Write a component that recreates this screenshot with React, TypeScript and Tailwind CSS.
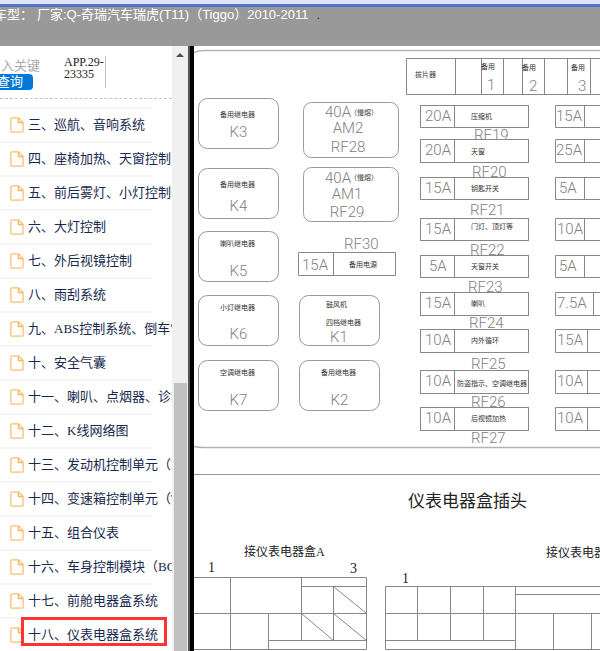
import React from "react";

const SANS = "font-['Liberation_Sans','Noto_Sans_CJK_SC',sans-serif]";
const SERIF = "font-['Liberation_Serif','Noto_Sans_CJK_SC',serif]";

const chapters = [
  "三、巡航、音响系统",
  "四、座椅加热、天窗控制",
  "五、前后雾灯、小灯控制",
  "六、大灯控制",
  "七、外后视镜控制",
  "八、雨刮系统",
  "九、ABS控制系统、倒车雷达",
  "十、安全气囊",
  "十一、喇叭、点烟器、诊断",
  "十二、K线网络图",
  "十三、发动机控制单元（ECU）",
  "十四、变速箱控制单元（TCU）",
  "十五、组合仪表",
  "十六、车身控制模块（BCM）",
  "十七、前舱电器盒系统",
  "十八、仪表电器盒系统",
];

function FileIcon() {
  return (
    <svg className="h-4 w-3.5 shrink-0" viewBox="0 0 14 16" fill="none" stroke="#fccf98" strokeWidth="1.7" aria-hidden="true">
      <path d="M2 .9h6.6l4.5 4.5V14a1.1 1.1 0 0 1-1.1 1.1H2A1.1 1.1 0 0 1 .9 14V2A1.1 1.1 0 0 1 2 .9Z" />
      <path d="M8.4 1.2v4.3H13" stroke="#f9b45e" strokeWidth="1.3" />
    </svg>
  );
}

type RelayProps = { x: number; y: number; name: string; nameY: number; code: string; codeY: number };

const relays: RelayProps[] = [
  { x: 198.5, y: 98.5, name: "备用继电器", nameY: 114, code: "K3", codeY: 131 },
  { x: 198.5, y: 168.5, name: "备用继电器", nameY: 184, code: "K4", codeY: 205 },
  { x: 198.5, y: 231.5, name: "喇叭继电器", nameY: 243, code: "K5", codeY: 270 },
  { x: 198.5, y: 295.5, name: "小灯继电器", nameY: 307, code: "K6", codeY: 333 },
  { x: 198.5, y: 360.5, name: "空调继电器", nameY: 372, code: "K7", codeY: 399 },
  { x: 299.5, y: 360.5, name: "备用继电器", nameY: 372, code: "K2", codeY: 399 },
];

const fuses = [
  { y: 105, h: 22, amp: "20A", ax: 425, label: "压缩机", lx: 471, ly: 116, rf: "RF19", rx: 474, ry: 134, right: "15A", bx: 556, split: 584 },
  { y: 139, h: 23, amp: "20A", ax: 425, label: "天窗", lx: 471, ly: 151, rf: "RF20", rx: 472, ry: 171, right: "25A", bx: 556, split: 584 },
  { y: 177, h: 22, amp: "15A", ax: 425, label: "钥匙开关", lx: 471, ly: 188, rf: "RF21", rx: 470, ry: 209, right: "5A", bx: 559, split: 584 },
  { y: 218, h: 22, amp: "15A", ax: 425, label: "门灯、顶灯等", lx: 471, ly: 226, rf: "RF22", rx: 470, ry: 249, right: "10A", bx: 557, split: 584 },
  { y: 255, h: 22, amp: "5A", ax: 429, label: "天窗开关", lx: 471, ly: 266, rf: "RF23", rx: 468, ry: 286, right: "5A", bx: 559, split: 584 },
  { y: 292, h: 23, amp: "15A", ax: 425, label: "喇叭", lx: 471, ly: 303, rf: "RF24", rx: 469, ry: 322, right: "7.5A", bx: 557, split: 593 },
  { y: 329, h: 23, amp: "10A", ax: 425, label: "内外循环", lx: 471, ly: 340, rf: "RF25", rx: 471, ry: 363, right: "15A", bx: 557, split: 587 },
  { y: 370, h: 23, amp: "10A", ax: 425, label: "防盗指示、空调继电器", lx: 457, ly: 383, rf: "RF26", rx: 471, ry: 401, right: "10A", bx: 557, split: 587 },
  { y: 407, h: 23, amp: "10A", ax: 425, label: "后视镜加热", lx: 471, ly: 418, rf: "RF27", rx: 471, ry: 437, right: "10A", bx: 557, split: 587 },
];

type WordProps = { x: number; y: number; children: string; middle?: boolean };

/* Plotter-style rating and designation text, vertically centred on y. */
function Code({ x, y, children, middle }: WordProps) {
  return (
    <text x={x} y={y + 6} textAnchor={middle ? "middle" : "start"} className="fill-[#808080] font-[Roboto,sans-serif] text-[15px] font-light">
      {children}
    </text>
  );
}

function Label({ x, y, children, middle }: WordProps) {
  return (
    <text x={x} y={y + 3} textAnchor={middle ? "middle" : "start"} className="fill-[#333333] font-['Noto_Sans_CJK_SC',sans-serif] text-[7px]">
      {children}
    </text>
  );
}

function Caption({ x, y, children }: WordProps) {
  return (
    <text x={x} y={y + 5} className="fill-[#222222] font-['Liberation_Serif','Noto_Sans_CJK_SC',serif] text-[12px]">
      {children}
    </text>
  );
}

function PinNumber({ x, y, children }: WordProps) {
  return (
    <text x={x} y={y + 5} className="fill-[#222222] font-['Liberation_Serif',serif] text-[14px]">
      {children}
    </text>
  );
}

function FuseBoxDiagram() {
  return (
    <svg className="block h-[605px] w-[446px] shrink-0" viewBox="194 46 446 605" fill="none" stroke="none" role="img" aria-label="仪表电器盒">
      <g stroke="#b4b4b4" strokeWidth="1.5">
        <path d="M194 52.5Q198 50.5 204 50.5H640" />
        <path d="M194 446.5Q198 447.5 203 447.5H640" />
      </g>
      <path d="M194 474.5H640" stroke="#999999" />

      <g stroke="#999999">
        {relays.map((r) => (
          <rect key={r.code} x={r.x} y={r.y} width="80" height="50" rx="9" />
        ))}
        <rect x="299.5" y="295.5" width="80" height="50" rx="9" />
        <rect x="303.5" y="102.5" width="95" height="55" rx="8" />
        <rect x="303.5" y="167.5" width="95" height="54" rx="8" />
      </g>
      {relays.map((r) => (
        <g key={r.code}>
          <Label x={r.x + 39} y={r.nameY} middle>{r.name}</Label>
          <Code x={r.x + 40} y={r.codeY} middle>{r.code}</Code>
        </g>
      ))}
      <Label x={326} y={304}>鼓风机</Label>
      <Label x={326} y={322}>四档继电器</Label>
      <Code x={330} y={336}>K1</Code>

      <Code x={325} y={111}>40A</Code>
      <Label x={350} y={112}>（慢熔）</Label>
      <Code x={348} y={127} middle>AM2</Code>
      <Code x={348} y={146} middle>RF28</Code>
      <Code x={325} y={177}>40A</Code>
      <Label x={350} y={177}>（慢熔）</Label>
      <Code x={347} y={193} middle>AM1</Code>
      <Code x={347} y={211} middle>RF29</Code>

      <Code x={344} y={243}>RF30</Code>
      <path d="M298.5 252.5H395.5V275.5H298.5ZM333.5 252.5V275.5" stroke="#888888" />
      <Code x={302} y={264}>15A</Code>
      <Label x={349} y={264}>备用电源</Label>

      <path
        d="M640 58.5H406.5V94.5H640M455.5 58.5V94.5M481.5 58.5V94.5M503.5 58.5V94.5M522.5 58.5V94.5M544.5 58.5V94.5M567.5 58.5V94.5M590.5 58.5V94.5"
        stroke="#888888"
      />
      <Label x={415} y={74}>拔片器</Label>
      <Label x={481} y={66}>备用</Label>
      <Label x={522} y={67}>备用</Label>
      <Label x={571} y={67}>备用</Label>
      <Code x={487} y={84}>1</Code>
      <Code x={529} y={85}>2</Code>
      <Code x={578} y={85}>3</Code>

      {fuses.map((f) => (
        <g key={f.rf}>
          <g stroke="#888888">
            <rect x="420.5" y={f.y + 0.5} width="108" height={f.h} />
            <path d={`M454.5 ${f.y}v${f.h}M640 ${f.y + 0.5}H555.5v${f.h}H640M${f.split + 0.5} ${f.y}v${f.h}`} />
          </g>
          <Code x={f.ax} y={f.y + 10}>{f.amp}</Code>
          <Label x={f.lx} y={f.ly}>{f.label}</Label>
          <Code x={f.rx} y={f.ry}>{f.rf}</Code>
          <Code x={f.bx} y={f.y + 10}>{f.right}</Code>
        </g>
      ))}

      <text x="408" y="507" className="fill-[#222222] font-['Noto_Sans_CJK_SC',sans-serif] text-[17px]">
        仪表电器盒插头
      </text>
      <Caption x={244} y={551}>接仪表电器盒A</Caption>
      <Caption x={546} y={552}>接仪表电器盒B</Caption>
      <PinNumber x={208} y={567}>1</PinNumber>
      <PinNumber x={350} y={568}>3</PinNumber>
      <PinNumber x={402} y={578}>1</PinNumber>

      <g stroke="#888888">
        <path d="M194 577.5H366.5V649.5H194M194 613.5H366.5M230.5 577V649M301.5 577V640M301.5 586.5H366.5M333.5 586.5V640M268.5 613.5V649M268.5 640.5H366.5" />
        <path d="M333.5 586.5L366.5 613.5M301.5 613.5L333.5 640.5M333.5 613.5L366.5 640.5" />
        <path d="M640 586.5H385.5V649.5H640M385.5 613.5H640M417.5 586.5V640.5M450.5 586.5V640.5M483.5 586.5V640.5M515.5 586.5V649.5M385.5 640.5H515.5M515.5 594.5H640M553.5 613.5V649.5M591.5 613.5V649.5" />
      </g>
    </svg>
  );
}

export default function App() {
  return (
    <div className={`flex h-screen flex-col overflow-hidden bg-white ${SANS}`}>
      <div className="h-1 shrink-0 bg-[#dde5f6]" />
      <div className="h-[3px] shrink-0 bg-[#5274c8]" />
      <header className="h-[39px] shrink-0 overflow-hidden bg-[#999999] text-[13px] leading-4 whitespace-nowrap text-white">
        <h1 className="-ml-1.5 flex">
          <span className="w-[43px]">车型：</span>
          <span>厂家:Q-奇瑞汽车瑞虎(T11)（Tiggo）2010-2011</span>
          <span className="ml-2 text-[#333333]">.</span>
        </h1>
      </header>

      <main className="flex min-h-0 flex-1 overflow-hidden">
        <aside className="w-[172px] shrink-0 overflow-hidden">
          <div className="flex h-[53px] border-b border-dashed border-[#c4c4c4] pt-2.5">
            <form className="w-16 pt-0.5" onSubmit={(e) => e.preventDefault()}>
              <input
                type="text"
                aria-label="关键字"
                placeholder="入关键"
                className="block h-4 w-11 bg-transparent pl-px text-[13px] leading-4 outline-none placeholder:text-[#aaaaaa]"
              />
              <button type="submit" className="block h-4 w-[33px] rounded-r-sm bg-[#0078d7] text-left text-[13px] leading-4 whitespace-nowrap text-white">
                <span className="-ml-1 pl-px">查询</span>
              </button>
            </form>
            <p className={`h-8 w-[42px] border-r border-[#c0c0c0] text-[12px] leading-3 text-[#222222] ${SERIF}`}>
              APP.29-
              <br />
              23335
            </p>
          </div>
          <nav aria-label="目录" className="mt-2">
            <ul>
              {chapters.map((title, i) => (
                <li key={title} className="relative h-[34px]">
                  <div className="h-0.5 w-[152px] bg-[#f5f5f5]" />
                  <a href="#" className={`flex h-8 items-center gap-1 pl-2.5 text-[13px] whitespace-nowrap text-[#17294d] ${SERIF}`}>
                    <FileIcon />
                    <span>{title}</span>
                  </a>
                  {i === chapters.length - 1 && (
                    <div className="pointer-events-none absolute top-0 left-[21px] h-[29px] w-[146px] border-3 border-[#ff3333]" />
                  )}
                </li>
              ))}
            </ul>
          </nav>
        </aside>

        <div className="flex w-4 shrink-0 flex-col items-center bg-[#f0f0f0]" aria-hidden="true">
          <svg className="mt-[7px] h-1 w-2 shrink-0" viewBox="0 0 8 4" fill="#505050">
            <path d="M4 0l4 4H0z" />
          </svg>
          <div className="mt-[326px] w-[13px] flex-1 bg-[#c1c1c1]" />
        </div>
        <div className="w-1.5 shrink-0 border-l-2 border-[#555555] bg-black" />

        <section className="min-w-0 flex-1 overflow-hidden">
          <FuseBoxDiagram />
        </section>
      </main>
    </div>
  );
}
